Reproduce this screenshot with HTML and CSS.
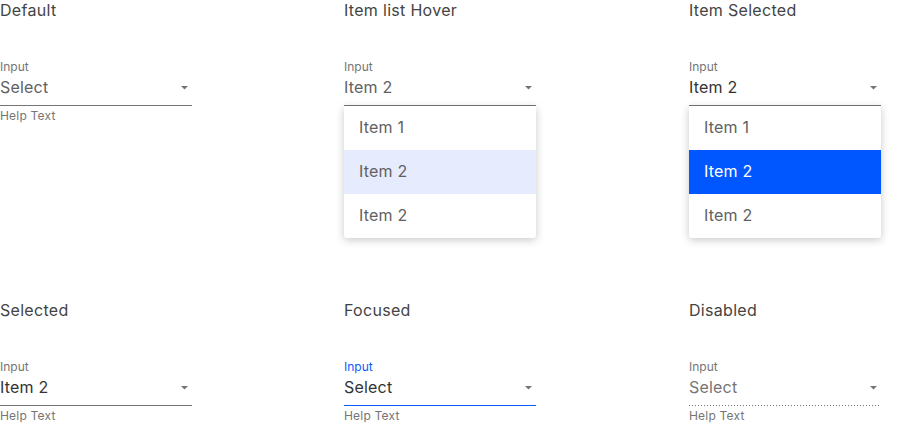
FILE: index.html
```html
<!DOCTYPE html>
<html>
<head>
    <meta charset="utf-8"/>
    <title>Select states</title>
    <link rel="stylesheet" href="styles.css">
</head>
<body>
<div class="board">
    <div class="state">
        <h3 class="state-title">Default</h3>
        <div class="field">
            <label class="field-label">Input</label>
            <div class="field-box">
                <span class="field-value placeholder">Select</span>
                <svg class="caret" width="8" height="4" viewBox="0 0 8 4"><path d="M0 0 H7 L3.5 3.5 Z"/></svg>
            </div>
            <div class="field-help">Help Text</div>
        </div>
    </div>

    <div class="state">
        <h3 class="state-title">Item list Hover</h3>
        <div class="field">
            <label class="field-label">Input</label>
            <div class="field-box">
                <span class="field-value placeholder">Item 2</span>
                <svg class="caret" width="8" height="4" viewBox="0 0 8 4"><path d="M0 0 H7 L3.5 3.5 Z"/></svg>
            </div>
            <ul class="menu">
                <li>Item 1</li>
                <li class="hover">Item 2</li>
                <li>Item 2</li>
            </ul>
        </div>
    </div>

    <div class="state">
        <h3 class="state-title">Item Selected</h3>
        <div class="field">
            <label class="field-label">Input</label>
            <div class="field-box">
                <span class="field-value">Item 2</span>
                <svg class="caret" width="8" height="4" viewBox="0 0 8 4"><path d="M0 0 H7 L3.5 3.5 Z"/></svg>
            </div>
            <ul class="menu">
                <li>Item 1</li>
                <li class="active">Item 2</li>
                <li>Item 2</li>
            </ul>
        </div>
    </div>

    <div class="state">
        <h3 class="state-title">Selected</h3>
        <div class="field">
            <label class="field-label">Input</label>
            <div class="field-box">
                <span class="field-value">Item 2</span>
                <svg class="caret" width="8" height="4" viewBox="0 0 8 4"><path d="M0 0 H7 L3.5 3.5 Z"/></svg>
            </div>
            <div class="field-help">Help Text</div>
        </div>
    </div>

    <div class="state">
        <h3 class="state-title">Focused</h3>
        <div class="field focused">
            <label class="field-label">Input</label>
            <div class="field-box">
                <span class="field-value">Select</span>
                <svg class="caret" width="8" height="4" viewBox="0 0 8 4"><path d="M0 0 H7 L3.5 3.5 Z"/></svg>
            </div>
            <div class="field-help">Help Text</div>
        </div>
    </div>

    <div class="state">
        <h3 class="state-title">Disabled</h3>
        <div class="field disabled">
            <label class="field-label">Input</label>
            <div class="field-box">
                <span class="field-value">Select</span>
                <svg class="caret" width="8" height="4" viewBox="0 0 8 4"><path d="M0 0 H7 L3.5 3.5 Z"/></svg>
            </div>
            <div class="field-help">Help Text</div>
        </div>
    </div>
</div>
</body>
</html>
```

FILE: styles.css
```css
* {
    margin: 0;
    padding: 0;
    box-sizing: border-box;
}
body {
    font-family: Inter, "Liberation Sans", sans-serif;
    background: #fff;
    color: #333;
    overflow: hidden;
}
.board {
    display: grid;
    grid-template-columns: 344px 345px 192px;
    grid-auto-rows: 300px;
}
.state-title {
    font-size: 16px;
    line-height: 20px;
    font-weight: 400;
    letter-spacing: 0.3px;
    color: #444;
    margin-bottom: 39px;
}
.field {
    position: relative;
    width: 192px;
}
.field-label {
    display: block;
    font-size: 12px;
    line-height: 16px;
    color: #757575;
}
.field-box {
    display: flex;
    align-items: center;
    justify-content: space-between;
    height: 31px;
    padding-bottom: 6px;
    border-bottom: 1px solid #757575;
}
.field-value {
    font-size: 16px;
    line-height: 24px;
    letter-spacing: 0.2px;
    color: #333;
}
.field-value.placeholder {
    color: #616161;
}
.caret {
    margin-right: 3px;
    margin-top: 2px;
    fill: #757575;
}
.field-help {
    font-size: 12px;
    line-height: 16px;
    margin-top: 2px;
    letter-spacing: 0.2px;
    color: #757575;
}
.focused .field-label {
    color: #0a5bff;
}
.focused .field-box {
    border-bottom-color: #0a5bff;
}
.disabled .field-value {
    color: #757575;
}
.disabled .field-box {
    border-bottom-color: transparent;
    background-image: linear-gradient(to right, #777 1px, transparent 1px);
    background-size: 3px 1px;
    background-repeat: repeat-x;
    background-origin: border-box;
    background-position: left bottom;
}
.menu {
    position: absolute;
    left: 0;
    top: 47px;
    width: 192px;
    list-style: none;
    background: #fff;
    border-radius: 0 0 3px 3px;
    box-shadow: 0 2px 8px rgba(0, 0, 0, 0.22);
    overflow: hidden;
}
.menu li {
    height: 44px;
    line-height: 42px;
    padding-left: 15px;
    font-size: 16px;
    letter-spacing: 0.2px;
    color: #616161;
}
.menu li.hover {
    background: #e6ecfd;
}
.menu li.active {
    background: #0057ff;
    color: #fff;
}
```
